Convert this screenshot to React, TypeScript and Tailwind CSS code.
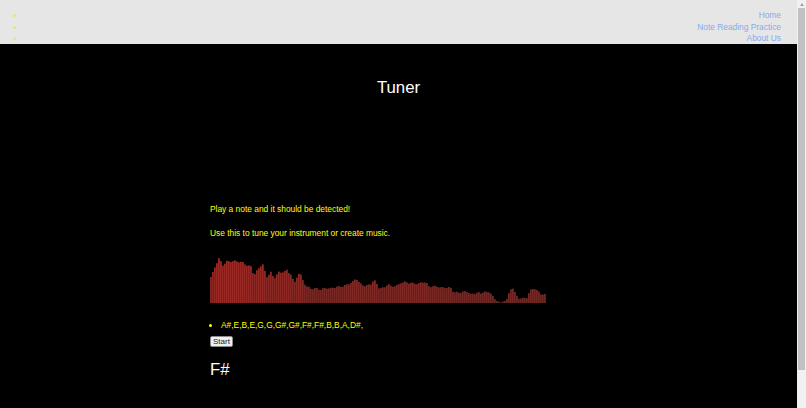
import React from 'react';

// Approximate spectrum envelope read off the analyser canvas: [x offset, bar height]
const envelope: [number, number][] = [
    [0, 26], [2, 30], [5, 38], [8, 44], [10, 41], [12, 38], [14, 40], [16, 42], [22, 42], [28, 41],
    [32, 40], [36, 38], [40, 37], [43, 28], [46, 32], [50, 37], [52, 38], [54, 31], [56, 26], [58, 29],
    [60, 31], [62, 27], [64, 26], [67, 31], [70, 30], [72, 31], [76, 32], [78, 30], [80, 29], [82, 24],
    [84, 21], [87, 29], [89, 31], [91, 25], [93, 20], [96, 16], [100, 14], [105, 15], [110, 14], [115, 15],
    [120, 14], [125, 16], [130, 17], [135, 18], [140, 20], [143, 21], [145, 25], [147, 22], [150, 19],
    [153, 18], [157, 18], [160, 19], [163, 23], [165, 20], [168, 15], [173, 15], [177, 20], [180, 17],
    [187, 17], [190, 20], [195, 21], [203, 20], [208, 19], [213, 21], [216, 19], [218, 17], [227, 17],
    [230, 15], [240, 15], [243, 11], [250, 11], [257, 11], [260, 8], [264, 10], [267, 11], [270, 10],
    [273, 12], [276, 10], [279, 11], [281, 8], [283, 4], [286, 2], [289, 1], [291, 0], [293, 3], [296, 4],
    [298, 9], [301, 16], [303, 13], [305, 7], [308, 5], [312, 5], [316, 6], [318, 10], [321, 14], [324, 14],
    [327, 11], [330, 9], [333, 9], [336, 8],
];

const heightAt = (x: number) => {
    for (let i = 1; i < envelope.length; i++) {
        const [x1, h1] = envelope[i];
        const [x0, h0] = envelope[i - 1];
        if (x <= x1) {
            const t = x1 === x0 ? 0 : (x - x0) / (x1 - x0);
            return h0 + (h1 - h0) * t;
        }
    }
    return envelope[envelope.length - 1][1];
};

const bars = Array.from({ length: 168 }, (_, i) => {
    const x = i * 2;
    const base = heightAt(x);
    const jitter = Math.sin(i * 1.7) * 0.8 + Math.sin(i * 0.55) * 0.5;
    const h = Math.max(0, base + (base > 2 ? jitter : 0));
    return { x, h };
});

const Spectrum = () => (
    <svg width="336" height="49" viewBox="0 0 336 49" className="block">
        {bars.map((b, i) => (
            <rect
                key={i}
                x={b.x}
                y={49 - b.h}
                width={1.8}
                height={b.h}
                fill={`rgb(${Math.round(Math.min(255, 98 + b.h * 1.35))},40,36)`}
            />
        ))}
    </svg>
);

// Browser scrollbar as it shows in the capture
const Scrollbar = () => (
    <aside className="flex w-[9px] flex-col bg-[#f1f1f1]">
        <div className="flex h-[8px] items-center justify-center">
            <div className="h-0 w-0 border-x-[2.5px] border-b-[3px] border-x-transparent border-b-[#a3a3a3]" />
        </div>
        <div className="mx-[1px] h-[362px] bg-[#c1c1c1]" />
    </aside>
);

const navLinks = ['Home', 'Note Reading Practice', 'About Us'];

export default function App() {
    return (
        <div className="flex h-[408px] overflow-hidden font-['Liberation_Sans',Arial,sans-serif] text-[8.4px] text-[#ffff00]">
            <div className="flex-1 bg-black">
                {/* Top nav */}
                <header className="h-[44px] bg-[#e6e6e6]">
                    <ul className="list-disc pl-[25px] pr-[16px] pt-[10px] leading-[11.5px] text-right text-[#ffff00] marker:text-[#e6e67a]">
                        {navLinks.map((l) => (
                            <li key={l}>
                                <a className="text-[#86abea]">{l}</a>
                            </li>
                        ))}
                    </ul>
                </header>

                <main>
                    <h1 className="mt-[34px] text-center text-[16.8px] leading-[19px] text-white font-normal">Tuner</h1>

                    <div className="mx-auto w-[377px]">
                        <p className="mt-[107px] leading-[10px]">Play a note and it should be detected!</p>
                        <p className="mt-[14px] leading-[10px]">Use this to tune your instrument or create music.</p>

                        <div className="mt-[16px]">
                            <Spectrum />
                        </div>

                        <ul className="mt-[17px] list-disc pl-[11px] leading-[10px]">
                            <li>A#,E,B,E,G,G,G#,G#,F#,F#,B,B,A,D#,</li>
                        </ul>

                        <button className="mt-[6px] block h-[11px] rounded-[2px] border border-[#8a8a8a] bg-[#efefef] px-[2px] text-[8px] leading-[9px] text-[#222]">
                            Start
                        </button>

                        <div className="mt-[13px] text-[16.8px] leading-[19px] text-white">F#</div>
                    </div>
                </main>
            </div>
            <Scrollbar />
        </div>
    );
}
